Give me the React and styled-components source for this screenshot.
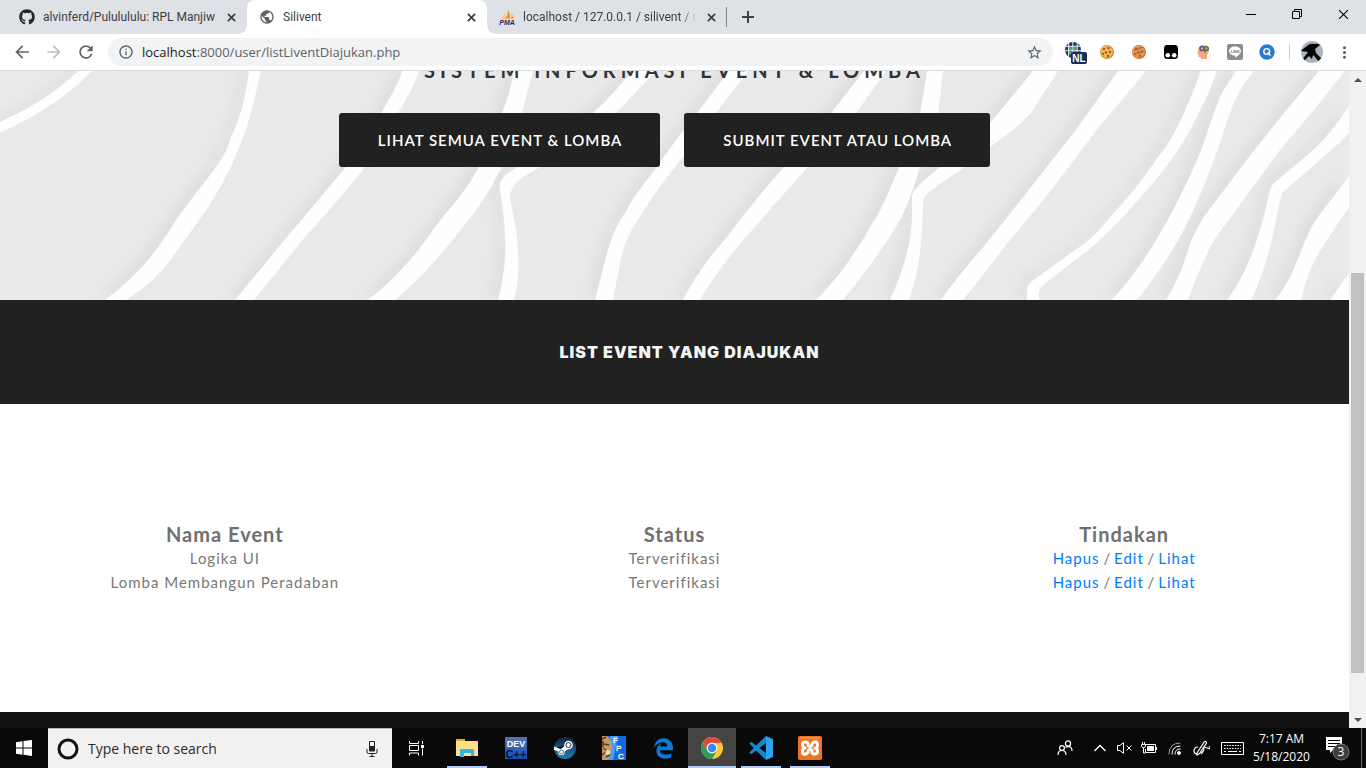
import React from "react";
import styled, { createGlobalStyle, css } from "styled-components";
import { MdArrowBack, MdArrowForward, MdRefresh, MdInfoOutline, MdStarBorder, MdPublic, MdMoreVert } from "react-icons/md";
import { FaGithub } from "react-icons/fa";
import { FaEdgeLegacy } from "react-icons/fa6";

const GlobalStyle = createGlobalStyle`
  * { box-sizing: border-box; }
  body { margin: 0; background: #fff; }
  button { border: 0; padding: 0; background: none; font: inherit; color: inherit; }
  h1, h2 { margin: 0; }
  svg { display: block; flex: none; }
`;

const ui = `"Open Sans", "Noto Sans", sans-serif`;
const site = `Lato, "Liberation Sans", sans-serif`;

const Screen = styled.div`
  display: flex;
  flex-direction: column;
  height: 100vh;
  overflow: hidden;
  font-family: ${ui};
`;

/* ---------- browser chrome ---------- */

const TabStrip = styled.div`
  display: flex;
  align-items: center;
  height: 34px;
  flex: none;
  padding-left: 7px;
  background: #dee1e6;
`;

const Tab = styled.div`
  display: flex;
  align-items: center;
  width: 240px;
  height: 34px;
  padding: 0 10px 0 12px;
  gap: 8px;
  font-family: Roboto, sans-serif;
  font-size: 12px;
  color: #3c4043;
  ${(p) =>
    p.$active &&
    css`
      background: #fff;
      border-radius: 8px 8px 0 0;
      position: relative;
      &::before,
      &::after {
        content: "";
        position: absolute;
        bottom: 0;
        width: 8px;
        height: 8px;
      }
      &::before {
        left: -8px;
        background: radial-gradient(circle at 0 0, transparent 7px, #fff 8px);
      }
      &::after {
        right: -8px;
        background: radial-gradient(circle at 100% 0, transparent 7px, #fff 8px);
      }
    `}
`;

const TabTitle = styled.span`
  flex: 1;
  min-width: 0;
  overflow: hidden;
  white-space: nowrap;
  ${(p) => p.$fade && css`
    mask-image: linear-gradient(to right, #000 90%, transparent);
  `}
`;

const SmallButton = styled.button`
  display: grid;
  place-items: center;
  width: 12px;
  height: 16px;
`;

const NewTab = styled.button`
  display: grid;
  place-items: center;
  width: 42px;
  height: 20px;
  border-left: 1px solid #808387;
  margin-left: -1px;
`;

const WindowControls = styled.div`
  display: flex;
  margin-left: auto;
  align-self: flex-start;
`;

const WindowButton = styled.button`
  display: grid;
  place-items: center;
  width: 46px;
  height: 28px;
`;

const Toolbar = styled.div`
  display: flex;
  align-items: center;
  flex: none;
  height: 37px;
  padding: 0 6px 0 8px;
  border-bottom: 1px solid #d9d9dd;
  color: #5f6368;
`;

const NavButton = styled.button`
  display: grid;
  place-items: center;
  width: 28px;
  height: 28px;
  margin-right: 4px;
  color: ${(p) => (p.$dim ? "#bdbfc2" : "#5f6368")};
`;

const Omnibox = styled.div`
  display: flex;
  align-items: center;
  flex: 1;
  height: 28px;
  margin: 0 6px 0 4px;
  padding: 0 10px;
  gap: 8px;
  border-radius: 14px;
  background: #f1f3f4;
`;

const Address = styled.div`
  flex: 1;
  font-size: 13px;
  line-height: 20px;
  font-family: ${ui};
  color: #5f6368;
  b { font-weight: 400; color: #202124; }
`;

const ExtButton = styled.button`
  display: grid;
  place-items: center;
  width: 32px;
  height: 28px;
`;

const Separator = styled.span`
  width: 1px;
  height: 16px;
  margin: 0 6px;
  background: #cfd1d4;
`;

/* ---------- page ---------- */

const Viewport = styled.div`
  display: flex;
  flex: 1;
  min-height: 0;
`;

const Page = styled.main`
  display: flex;
  flex-direction: column;
  flex: 1;
  min-width: 0;
  overflow: hidden;
  font-family: ${site};
`;

const Hero = styled.section`
  position: relative;
  display: flex;
  flex-direction: column;
  align-items: center;
  justify-content: flex-end;
  flex: none;
  height: 229px;
  padding-bottom: 133px;
  overflow: hidden;
  background: #eaeaea;
`;

const Backdrop = styled.svg`
  position: absolute;
  inset: 0;
  width: 100%;
  height: 100%;
`;

const HeroTitle = styled.h1`
  position: relative;
  margin-bottom: 31px;
  font-size: 20px;
  line-height: 24px;
  font-weight: 700;
  letter-spacing: 5px;
  white-space: nowrap;
  color: #333;
`;

const HeroActions = styled.div`
  position: relative;
  display: flex;
  gap: 24px;
  padding-right: 20px;
`;

const HeroButton = styled.button`
  height: 54px;
  padding: 0 38px 0 39px;
  border-radius: 3px;
  background: #212121;
  color: #fff;
  font-size: 15px;
  font-weight: 600;
  letter-spacing: 1px;
  white-space: nowrap;
`;

const Band = styled.section`
  display: grid;
  place-items: center;
  flex: none;
  height: 104px;
  padding-left: 30px;
  background: #212121;
`;

const BandTitle = styled.h2`
  font-family: Inter, sans-serif;
  font-size: 16px;
  line-height: 24px;
  font-weight: 900;
  letter-spacing: 1px;
  color: #f5f5f5;
`;

const ListSection = styled.section`
  flex: none;
  padding: 118px 0;
  background: #fff;
`;

const EventTable = styled.table`
  width: 100%;
  table-layout: fixed;
  border-collapse: collapse;
  text-align: center;
  color: #777;
  font-size: 15px;
  line-height: 24px;
  letter-spacing: 1px;
  th, td { padding: 0; }
  th { font-size: 20px; font-weight: 700; color: #6f6f6f; }
`;

const Action = styled.a`
  color: #007bff;
  text-decoration: none;
`;

const Slash = styled.span`
  letter-spacing: 0;
`;

const Footer = styled.footer`
  flex: 1;
  background: #121212;
`;

const Scrollbar = styled.div`
  display: flex;
  flex-direction: column;
  align-items: center;
  width: 17px;
  background: #f1f1f1;
`;

const ScrollArrow = styled.button`
  display: grid;
  place-items: center;
  width: 17px;
  height: 17px;
`;

const Track = styled.div`
  flex: 1;
  display: flex;
  flex-direction: column;
  width: 13px;
  padding: 185px 0 38px;
`;

const Thumb = styled.div`
  flex: 1;
  background: #c1c1c1;
`;

/* ---------- taskbar ---------- */

const Taskbar = styled.footer`
  display: flex;
  flex: none;
  height: 40px;
  background: #090909;
  color: #fff;
`;

const TaskButton = styled.button`
  display: grid;
  place-items: center;
  width: ${(p) => p.$w || 48}px;
  height: 40px;
`;

const Search = styled.label`
  display: flex;
  align-items: center;
  width: 344px;
  height: 40px;
  padding: 0 14px 0 8px;
  gap: 8px;
  border-top: 1px solid #b5b5b5;
  background: #f1f1f1;
  input {
    flex: 1;
    min-width: 0;
    border: 0;
    padding: 0;
    outline: 0;
    background: none;
    font-family: ${ui};
    font-size: 14px;
    color: #2b2b2b;
  }
  input::placeholder { color: #2b2b2b; opacity: 1; }
`;

const Apps = styled.div`
  display: flex;
  gap: 1px;
  margin-left: 3px;
`;

const AppButton = styled.button`
  display: flex;
  flex-direction: column;
  align-items: center;
  width: 48px;
  height: 40px;
  background: ${(p) => (p.$active ? "#444443" : "transparent")};
  &::after {
    content: "";
    height: 2px;
    width: ${(p) => (p.$active ? 48 : 40)}px;
    background: ${(p) => (p.$open || p.$active ? "#b1cbf8" : "transparent")};
  }
`;

const AppIcon = styled.span`
  flex: 1;
  display: grid;
  place-items: center;
  padding-top: 2px;
`;

const Tray = styled.div`
  display: flex;
  margin-left: auto;
`;

const Clock = styled.time`
  display: flex;
  flex-direction: column;
  justify-content: center;
  align-items: center;
  width: 65px;
  font-size: 12px;
  line-height: 18px;
  white-space: nowrap;
`;

const ShowDesktop = styled.button`
  width: 5px;
  height: 40px;
  border-left: 1px solid #6b6b6b;
`;

/* ---------- drawings ---------- */

const ribbons = [
  "M78 0Q50 28 0 51V62Q60 34 92 0Z",
  "M249 0C246 22 242 44 231 66C226 90 200 114 174 152C156 182 136 206 105 229H126C146 216 160 204 174 184L207 138C222 114 232 96 239 76C249 54 254 30 261 0Z",
  "M402 0C398 14 390 26 383 39C372 58 360 77 346 96L287 166L235 229H254L305 166Q345 122 365 96C380 72 390 57 398 42C409 24 414 14 419 0Z",
  "M514 0C510 20 507 30 502 42C497 60 490 76 479 96C465 122 448 139 435 156C420 178 400 204 368 229H395C415 212 430 196 447 176C464 154 486 130 500 99C512 70 518 56 522 42Q528 18 533 0Z",
  "M632 0Q612 25 593 42L518 96C503 104 498 110 500 119C503 136 506 160 505 186Q504 206 498 229H514Q520 204 518 182C518 160 513 146 510 126C511 114 520 106 541 96L616 42L656 0Z",
  "M729 0L697 42Q678 66 660 91C647 111 634 123 627 139C616 154 610 170 605 190L595 229H613L620 192C624 172 630 160 640 146C652 126 666 107 683 86Q700 62 716 42L748 0Z",
  "M864 0L831 42L784 96Q752 132 727 166Q697 200 683 229H700Q718 198 746 166Q772 136 808 96L856 42L886 0Z",
  "M927 0Q924 20 920 42C915 62 908 80 899 96C889 120 882 139 870 156Q847 198 816 229H843Q872 194 896 156C907 138 914 116 920 96C928 76 934 60 938 42Q941 20 943 0Z",
  "M1033 0L990 52L940 96C924 110 912 118 912 127V145Q912 180 890 229H909C916 208 920 190 921 170C923 152 922 142 924 127C930 119 940 113 965 96L990 76Q1016 58 1031 42L1058 0Z",
  "M1118 0L1075 60L1031 116L985 174Q960 202 941 229H963Q985 202 1006 174L1049 122L1096 60L1146 0Z",
  "M1201 0Q1193 22 1184 42C1175 62 1168 74 1158 86C1143 108 1128 127 1110 146C1098 162 1086 172 1075 179L1031 211Q1027 214 1027 220V229H1039V221Q1040 216 1046 212L1097 172C1120 150 1140 128 1158 106C1176 84 1187 66 1195 49Q1208 26 1217 0Z",
  "M1236 0C1230 10 1223 18 1219 29C1211 48 1206 68 1197 89Q1180 128 1162 159Q1140 198 1112 229H1137Q1162 198 1180 166Q1200 128 1214 89C1222 68 1226 50 1234 32Q1242 14 1254 0Z",
  "M1319 0L1284 42L1249 86L1208 140C1196 156 1190 172 1186 186Q1178 210 1166 229H1188Q1198 200 1214 169L1280 79L1313 40L1345 0Z",
  "M1349 35Q1332 62 1310 82L1274 112C1268 118 1268 134 1262 152Q1248 202 1227 229H1251Q1264 202 1271 172C1276 152 1278 136 1282 122Q1312 96 1330 80Q1340 72 1349 62Z",
  "M1349 105C1336 124 1320 140 1310 159C1298 184 1294 206 1275 229H1301Q1308 200 1319 182Q1334 157 1349 137Z",
  "M1349 202L1330 229H1349Z",
];

function Waves() {
  return (
    <Backdrop viewBox="0 0 1349 229" preserveAspectRatio="none" aria-hidden="true">
      <defs>
        <filter id="soft" x="-5%" y="-20%" width="110%" height="140%">
          <feGaussianBlur stdDeviation="7" />
        </filter>
      </defs>
      <g filter="url(#soft)" fill="#d2d2d2" opacity="0.5" transform="translate(-9 -2)">
        {ribbons.map((d) => <path key={d} d={d} />)}
      </g>
      <g fill="#fefefe">
        {ribbons.map((d) => <path key={d} d={d} />)}
      </g>
    </Backdrop>
  );
}

const Cross = ({ size = 9, color = "#3c4043", weight = 2 }) => (
  <svg width={size} height={size} viewBox="0 0 10 10" stroke={color} strokeWidth={weight}>
    <path d="M1 1l8 8M9 1l-8 8" />
  </svg>
);

const PmaLogo = () => (
  <svg width="16" height="16" viewBox="0 0 16 16">
    <path d="M5 2Q6 7 1 11Q4 10 6 10Q6 5 5 2Z" fill="#f9c27a" />
    <path d="M9 1Q9 6 6 10Q9 9 11 10Q12 5 9 1Z" fill="#f7941d" />
    <path d="M12 4Q14 6 15 10L12 10Q13 7 12 4Z" fill="#f9a94a" />
    <text x="8" y="16" textAnchor="middle" fontFamily="Liberation Sans" fontSize="7" fontWeight="700" fontStyle="italic" fill="#2b2c5c">PMA</text>
  </svg>
);

const NlGlobe = () => (
  <svg width="24" height="24" viewBox="0 0 24 24">
    <circle cx="10" cy="10" r="8" fill="#22395f" />
    <path d="M6 7h3v3H6zM10.500 7h3v3h-3zM6 11.500h3v3H6zM10.500 11.500h3v3h-3z" fill="#4caf62" />
    <path d="M2 10.700h16M3 6.300h14M9.800 2v16M5.600 3v14M14.200 3v14" stroke="#e8eef5" strokeWidth="1" fill="none" />
    <rect x="8" y="12" width="16" height="12" rx="2" fill="#1c2c50" />
    <text x="16" y="22" textAnchor="middle" fontFamily="Liberation Sans" fontSize="10" fontWeight="700" fill="#fff">NL</text>
  </svg>
);

const Cookie = ({ dark }) => (
  <svg width="16" height="16" viewBox="0 0 16 16">
    <circle cx="8" cy="8" r="7" fill={dark ? "#c9722e" : "#c98a2c"} />
    <circle cx="7.500" cy="7.500" r="6.300" fill={dark ? "#e39a57" : "#eeb24e"} />
    <g fill={dark ? "#96481c" : "#74461a"}>
      <circle cx="5" cy="5" r="1" /><circle cx="9.500" cy="4" r="0.900" /><circle cx="11" cy="8" r="1" />
      <circle cx="7" cy="8.500" r="1" /><circle cx="4" cy="10" r="0.900" /><circle cx="9" cy="12" r="1" />
    </g>
    {dark && <path d="M3 7l9-4M3 11l10-5M6 3l4 10" stroke="#b8652b" strokeWidth="0.700" />}
  </svg>
);

const Mask = () => (
  <svg width="16" height="16" viewBox="0 0 16 16">
    <path d="M4 1h8q3 0 3 4v6q0 4-3 4H4q-3 0-3-4V5q0-4 3-4z" fill="#000" />
    <circle cx="4.800" cy="11.300" r="2.300" fill="#fff" /><circle cx="11.200" cy="11.300" r="2.300" fill="#fff" />
  </svg>
);

const Head = () => (
  <svg width="16" height="16" viewBox="0 0 16 16">
    <path d="M3 7Q3 1 9 1q5 0 5 5 0 3-2 5v4H6l-.5-2H3.500l-.3-3L2 9.500z" fill="#f5a97f" />
    <circle cx="7" cy="4.500" r="2" fill="none" stroke="#6b3fa0" strokeWidth="1.500" />
    <circle cx="11.500" cy="4.500" r="1.800" fill="none" stroke="#2e8b4a" strokeWidth="1.500" />
    <circle cx="10" cy="7.500" r="1" fill="#4657b5" />
  </svg>
);

const LineLogo = () => (
  <svg width="16" height="16" viewBox="0 0 16 16">
    <rect width="16" height="16" rx="2" fill="#8d8d8d" />
    <path d="M8 2.500c3.400 0 6 2 6 4.600 0 2.500-3 4.700-5.800 6.700V11.800C4.700 11.700 2 9.700 2 7.100s2.600-4.600 6-4.600z" fill="#fff" />
    <text x="8" y="8.500" textAnchor="middle" fontFamily="Liberation Sans" fontSize="4" fontWeight="700" fill="#777">LINE</text>
  </svg>
);

const BlueSearch = () => (
  <svg width="16" height="16" viewBox="0 0 16 16">
    <circle cx="8" cy="8" r="7.700" fill="#2a7ad2" />
    <circle cx="7.700" cy="7.500" r="2.900" fill="none" stroke="#fff" strokeWidth="1.400" />
    <path d="M8.500 8.500l3 3" stroke="#fff" strokeWidth="1.500" />
  </svg>
);

const Avatar = () => (
  <svg width="22" height="22" viewBox="0 0 22 22">
    <clipPath id="av"><circle cx="11" cy="11" r="11" /></clipPath>
    <g clipPath="url(#av)">
      <rect width="22" height="22" fill="#aab4bf" />
      <path d="M2 8L6 5Q9 2 13 3Q17 2 19 4L14 8L15 12L22 19L19 22L14 16L12 14L11 18L8 15L3 20L1 19L7 11L0 10Z" fill="#050505" />
    </g>
  </svg>
);

const Triangle = ({ down }) => (
  <svg width="8" height="4" viewBox="0 0 8 4"><path d={down ? "M0 0h8L4 4z" : "M0 4h8L4 0z"} fill="#505050" /></svg>
);

const WindowsLogo = () => (
  <svg width="16" height="16" viewBox="0 0 16 16" fill="#fff">
    <path d="M0 2.200L6.500 1.300V7.500H0zM7.500 1.100L16 0v7.500H7.500zM0 8.500h6.500v6.200L0 13.800zM7.500 8.500H16V16l-8.500-1.200z" />
  </svg>
);

const Mic = () => (
  <svg width="12" height="18" viewBox="0 0 12 18" fill="none" stroke="#222">
    <path d="M3.500 1.500h5v9h-5z" /><path d="M3.500 6.500h5v4.500h-5z" fill="#222" />
    <path d="M1 9v3q0 1.500 1.500 1.500h7Q11 13.500 11 12V9M6 13.500V16.500M3.500 16.500h5" />
  </svg>
);

const TaskView = () => (
  <svg width="17" height="16" viewBox="0 0 17 16" fill="none" stroke="#fff">
    <path d="M1.500 1v2.500h9V1M1.500 15.500V13h9v2.500M1.500 5.500h9v5h-9zM14.500 1v3M14.500 8.500v7" />
    <path d="M13 5h3v3h-3z" fill="#fff" stroke="none" />
  </svg>
);

const Explorer = () => (
  <svg width="22" height="20" viewBox="0 0 22 20">
    <path d="M0 1h8l1 2h12q1 0 1 1v14H0z" fill="#ffe08a" />
    <path d="M0 1h9v2H0z" fill="#e9a91c" />
    <path d="M4 18v-6q0-1 1-1h12q1 0 1 1v6h-3v-3H8v4H4z" fill="#38b3e8" />
  </svg>
);

const DevCpp = () => (
  <svg width="22" height="22" viewBox="0 0 22 22">
    <defs><linearGradient id="dv" x2="0" y2="1"><stop stopColor="#5872b4" /><stop offset="1" stopColor="#1450b8" /></linearGradient></defs>
    <rect width="22" height="22" fill="url(#dv)" />
    <text x="11" y="10" textAnchor="middle" fontFamily="Liberation Sans" fontSize="9" fontWeight="700" fill="#fff">DEV</text>
    <text x="11" y="21" textAnchor="middle" fontFamily="Liberation Sans" fontSize="11" fontWeight="700" fill="#03143f">C++</text>
  </svg>
);

const Steam = () => (
  <svg width="22" height="22" viewBox="0 0 22 22">
    <defs><linearGradient id="st" x2="0" y2="1"><stop stopColor="#14213d" /><stop offset="1" stopColor="#1e80b8" /></linearGradient></defs>
    <circle cx="11" cy="11" r="11" fill="url(#st)" />
    <path d="M0 11L7 14L14 8M7 15L15 10" stroke="#fff" strokeWidth="3" />
    <circle cx="14.500" cy="8" r="4.300" fill="#fff" /><circle cx="14.500" cy="8" r="2.500" fill="#fff" stroke="#1b3458" strokeWidth="1" />
    <circle cx="7.500" cy="15" r="3.200" fill="#fff" /><circle cx="7.500" cy="15" r="2" fill="#fff" stroke="#1c6596" strokeWidth="0.900" />
  </svg>
);

const Fpc = () => (
  <svg width="24" height="24" viewBox="0 0 24 24">
    <rect width="24" height="24" fill="#0f6ce0" />
    <path d="M8 0h8L11 24H5z" fill="#4e9af2" />
    <path d="M0 0h5q3 2 4 7l1 6-2 8-3 3H0z" fill="#c39a68" />
    <path d="M0 3l4-2M2 8l5 1M1 12l5 3M0 19l4-3M4 21l4-2M1 5v6" stroke="#54391f" strokeWidth="1.400" />
    <path d="M5 13l4 3-3 3-3-1z" fill="#e8dac7" />
    <g fontFamily="Liberation Sans" fontSize="8" fill="#fff" stroke="#fff" strokeWidth="0.300">
      <text x="11" y="7">F</text><text x="14" y="15">P</text><text x="16" y="23">C</text>
    </g>
  </svg>
);

const Chrome = () => (
  <svg width="22" height="22" viewBox="0 0 22 22">
    <circle cx="11" cy="11" r="11" fill="#fbc934" />
    <path d="M1.470 5.500A11 11 0 0 0 11 22L15.800 13.800 11 11 6.200 13.800z" fill="#24a05a" />
    <path d="M1.470 5.500A11 11 0 0 1 20.530 5.500L20.700 6H11L6.200 13.800z" fill="#de4a3c" />
    <circle cx="11" cy="11" r="5.400" fill="#fff" /><circle cx="11" cy="11" r="4.300" fill="#4285f4" />
  </svg>
);

const Code = () => (
  <svg width="24" height="24" viewBox="0 0 24 24">
    <path d="M17 0L7 9.500 2.500 6 0 7.300 4.800 12 0 16.700 2.500 18 7 14.500 17 24V17L10.500 12 17 7z" fill="#1387cf" />
    <path d="M17 0l7 3v18l-7 3z" fill="#2aa4ef" />
  </svg>
);

const Xampp = () => (
  <svg width="24" height="24" viewBox="0 0 24 24">
    <rect width="24" height="24" rx="2" fill="#ee7423" />
    <path d="M2 2h20" stroke="#f6a56d" />
    <path
      d="M7 12Q4.500 11 4.500 8.500T7.500 6Q10 6 10 8.500T12 10.500 14 8.500 16.500 6 19.500 8.500 17 12Q19.500 13 19.500 15.500T16.500 18 14 15.500 12 13.500 10 15.500 7.500 18 4.500 15.500 7 12z"
      fill="none" stroke="#fff" strokeWidth="3" strokeLinejoin="round"
    />
  </svg>
);

const line = { fill: "none", stroke: "#fff" };

const People = () => (
  <svg width="16" height="16" viewBox="0 0 16 16" {...line} strokeWidth="1.200">
    <circle cx="5" cy="8" r="2.400" /><path d="M1 15q0-4.500 4-4.500T9 15" />
    <circle cx="11" cy="3.500" r="2.600" /><path d="M8.500 7.500Q10 6.300 11.500 6.300 15 6.500 15 11" />
  </svg>
);
const Chevron = () => <svg width="12" height="8" viewBox="0 0 12 8" {...line} strokeWidth="1.300"><path d="M.5 7L6 1.500 11.500 7" /></svg>;
const Muted = () => (
  <svg width="15" height="12" viewBox="0 0 15 12" {...line}><path d="M.5 3.500H3L6.500.7v10.600L3 8.500H.5zM9.500 3.500l5 5M14.500 3.500l-5 5" /></svg>
);
const Battery = () => (
  <svg width="16" height="12" viewBox="0 0 16 12" {...line}>
    <path d="M5 2.500h9.500v8H4.500V7M15.500 5v3" /><path d="M6.500 4.500h6v4h-6z" fill="#fff" />
    <path d="M1.500 0v2M3.500 0v2M.5 2.500h4v2q0 1-2 1t-2-1zM2.500 5.500V11h2" />
  </svg>
);
const Wifi = () => (
  <svg width="13" height="13" viewBox="0 0 13 13" {...line}>
    <path d="M1 12.500Q1 1 12.500 1" opacity="0.600" /><path d="M4 12.500Q4 4 12.500 4M7 12.500Q7 7 12.500 7" /><circle cx="11" cy="11" r="1.500" fill="#fff" />
  </svg>
);
const Pen = () => (
  <svg width="17" height="16" viewBox="0 0 17 16" {...line} strokeWidth="1.200">
    <path d="M4 13L11.500 1.500q2-.5 2 1.500L6.500 13.500 4 15zM5 7Q1 7 1 11q0 3 3 3M8 14Q12 10 10.500 8T14 8t2-1.500" />
  </svg>
);
const Keyboard = () => (
  <svg width="23" height="13" viewBox="0 0 23 13" {...line}>
    <path d="M.5.5h22v12H.5z" /><path d="M3 3.500h17M3 6.500h17" strokeDasharray="1.500 1.200" /><path d="M3 9.500h2M7 9.500h9M18 9.500h2" />
  </svg>
);
const Notifications = () => (
  <svg width="28" height="26" viewBox="0 0 28 26">
    <path d="M2 2h16v13H9l-3 3v-3H2z" fill="#fff" /><path d="M4 5.500h12M4 8.500h12M4 11.500h8" stroke="#090909" />
    <circle cx="17" cy="17" r="8" fill="#3d3d3d" stroke="#777" />
    <text x="17" y="21" textAnchor="middle" fontFamily="Open Sans" fontSize="12" fill="#fff">3</text>
  </svg>
);

/* ---------- app ---------- */

const tabs = [
  { title: "alvinferd/Pululululu: RPL Manjiw", icon: <FaGithub size={16} color="#24292e" /> },
  { title: "Silivent", icon: <MdPublic size={16} color="#5f6368" />, active: true },
  { title: "localhost / 127.0.0.1 / silivent / us", icon: <PmaLogo />, fade: true },
];

const extensions = [
  ["Language", <NlGlobe />], ["Cookies", <Cookie />], ["Cookie editor", <Cookie dark />], ["Mask", <Mask />],
  ["Mind", <Head />], ["LINE", <LineLogo />], ["Search", <BlueSearch />],
];

const events = [
  { name: "Logika UI", status: "Terverifikasi" },
  { name: "Lomba Membangun Peradaban", status: "Terverifikasi" },
];

const apps = [
  { name: "File Explorer", icon: <Explorer />, open: true },
  { name: "Dev-C++", icon: <DevCpp /> },
  { name: "Steam", icon: <Steam /> },
  { name: "Free Pascal", icon: <Fpc /> },
  { name: "Edge", icon: <FaEdgeLegacy size={21} color="#0a7ad8" /> },
  { name: "Chrome", icon: <Chrome />, active: true },
  { name: "Visual Studio Code", icon: <Code />, open: true },
  { name: "XAMPP", icon: <Xampp />, open: true },
];

const tray = [
  ["People", 47, <People />], ["Show hidden icons", 24, <Chevron />], ["Volume", 24, <Muted />], ["Battery", 26, <Battery />],
  ["Network", 25, <Wifi />], ["Windows Ink", 28, <Pen />], ["Keyboard", 34, <Keyboard />],
];

export default function App() {
  return (
    <Screen>
      <GlobalStyle />
      <TabStrip>
        {tabs.map((t) => (
          <Tab key={t.title} $active={t.active}>
            {t.icon}
            <TabTitle $fade={t.fade}>{t.title}</TabTitle>
            <SmallButton aria-label="Close tab"><Cross /></SmallButton>
          </Tab>
        ))}
        <NewTab aria-label="New tab">
          <svg width="12" height="12" viewBox="0 0 12 12" stroke="#3c4043" strokeWidth="2"><path d="M6 0v12M0 6h12" /></svg>
        </NewTab>
        <WindowControls>
          <WindowButton aria-label="Minimize"><svg width="10" height="10" stroke="#000"><path d="M0 5.500h10" /></svg></WindowButton>
          <WindowButton aria-label="Restore"><svg width="10" height="10" stroke="#000" fill="none"><path d="M.5 2.500h7v7h-7zM2.500 2.500v-2h7v7h-2" /></svg></WindowButton>
          <WindowButton aria-label="Close"><Cross size={11} color="#000" weight={1} /></WindowButton>
        </WindowControls>
      </TabStrip>
      <Toolbar>
        <NavButton aria-label="Back"><MdArrowBack size={20} /></NavButton>
        <NavButton $dim aria-label="Forward"><MdArrowForward size={20} /></NavButton>
        <NavButton aria-label="Reload"><MdRefresh size={20} /></NavButton>
        <Omnibox>
          <MdInfoOutline size={16} />
          <Address><b>localhost</b>:8000/user/listLiventDiajukan.php</Address>
          <MdStarBorder size={17} />
        </Omnibox>
        {extensions.map(([name, icon]) => <ExtButton key={name} aria-label={name}>{icon}</ExtButton>)}
        <Separator />
        <ExtButton aria-label="Profile"><Avatar /></ExtButton>
        <ExtButton aria-label="Menu"><MdMoreVert size={19} /></ExtButton>
      </Toolbar>

      <Viewport>
        <Page>
          <Hero>
            <Waves />
            <HeroTitle>SISTEM INFORMASI EVENT &amp; LOMBA</HeroTitle>
            <HeroActions>
              <HeroButton>LIHAT SEMUA EVENT &amp; LOMBA</HeroButton>
              <HeroButton>SUBMIT EVENT ATAU LOMBA</HeroButton>
            </HeroActions>
          </Hero>
          <Band><BandTitle>LIST EVENT YANG DIAJUKAN</BandTitle></Band>
          <ListSection>
            <EventTable>
              <thead>
                <tr><th>Nama Event</th><th>Status</th><th>Tindakan</th></tr>
              </thead>
              <tbody>
                {events.map((e) => (
                  <tr key={e.name}>
                    <td>{e.name}</td>
                    <td>{e.status}</td>
                    <td>
                      <Action href="#hapus">Hapus</Action><Slash> / </Slash><Action href="#edit">Edit</Action><Slash> / </Slash><Action href="#lihat">Lihat</Action>
                    </td>
                  </tr>
                ))}
              </tbody>
            </EventTable>
          </ListSection>
          <Footer />
        </Page>
        <Scrollbar>
          <ScrollArrow aria-label="Scroll up"><Triangle /></ScrollArrow>
          <Track><Thumb /></Track>
          <ScrollArrow aria-label="Scroll down"><Triangle down /></ScrollArrow>
        </Scrollbar>
      </Viewport>

      <Taskbar>
        <TaskButton aria-label="Start"><WindowsLogo /></TaskButton>
        <Search>
          <svg width="24" height="24" viewBox="0 0 24 24"><circle cx="12" cy="12" r="9" fill="none" stroke="#111" strokeWidth="3" /></svg>
          <input type="text" placeholder="Type here to search" aria-label="Type here to search" />
          <Mic />
        </Search>
        <TaskButton aria-label="Task view"><TaskView /></TaskButton>
        <Apps>
          {apps.map((a) => (
            <AppButton key={a.name} $open={a.open} $active={a.active} aria-label={a.name}>
              <AppIcon>{a.icon}</AppIcon>
            </AppButton>
          ))}
        </Apps>
        <Tray>
          {tray.map(([name, w, icon]) => <TaskButton key={name} $w={w} aria-label={name}>{icon}</TaskButton>)}
          <Clock><span>7:17 AM</span><span>5/18/2020</span></Clock>
          <TaskButton $w={47} aria-label="Notifications"><Notifications /></TaskButton>
          <ShowDesktop aria-label="Show desktop" />
        </Tray>
      </Taskbar>
    </Screen>
  );
}
